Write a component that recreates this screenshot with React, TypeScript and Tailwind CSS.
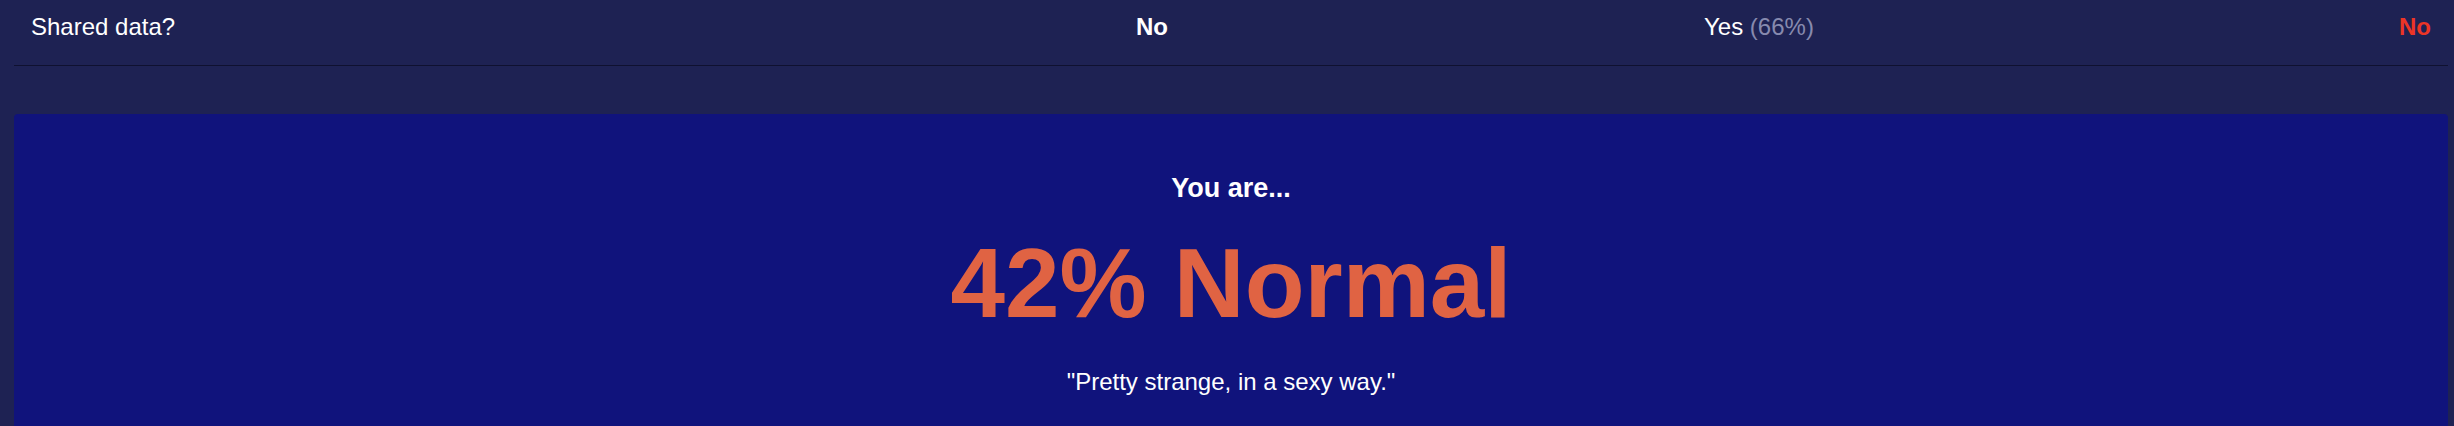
import React from 'react';

// 結果區塊：上方是問答列，下方是分數卡片
const rows = [
  { label: 'Shared data?', mine: 'No', others: 'Yes', pct: '66%', match: 'No' },
];

export default function App() {
  return (
    <div className="h-[426px] overflow-hidden bg-[#1e2253] font-['Liberation_Sans',Arial,sans-serif] text-white">
      <div className="pl-[14px] pr-[6px]">
        {rows.map((r, idx) => (
          <div
            key={idx}
            className="grid grid-cols-[1105px_568px_1fr_auto] px-[17px] pt-[13px] pb-[25px] text-[24px] leading-[27px] border-b border-[#0f1130]"
          >
            <span>{r.label}</span>
            <span className="font-bold">{r.mine}</span>
            <span>
              {r.others} <span className="text-[#878aae]">({r.pct})</span>
            </span>
            <span className="font-bold text-[#ec3526] text-right">{r.match}</span>
          </div>
        ))}

        <div className="mt-[48px] h-[340px] rounded-t-[4px] bg-[#10137c] pt-[59px] flex flex-col items-center text-center">
          <h2 className="text-[27px] leading-[30px] font-bold">You are...</h2>
          <p className="mt-[31px] text-[98px] leading-[98px] font-bold text-[#e06343]">42% Normal</p>
          <p className="mt-[36px] text-[24px] leading-[28px]">"Pretty strange, in a sexy way."</p>
        </div>
      </div>
    </div>
  );
}
